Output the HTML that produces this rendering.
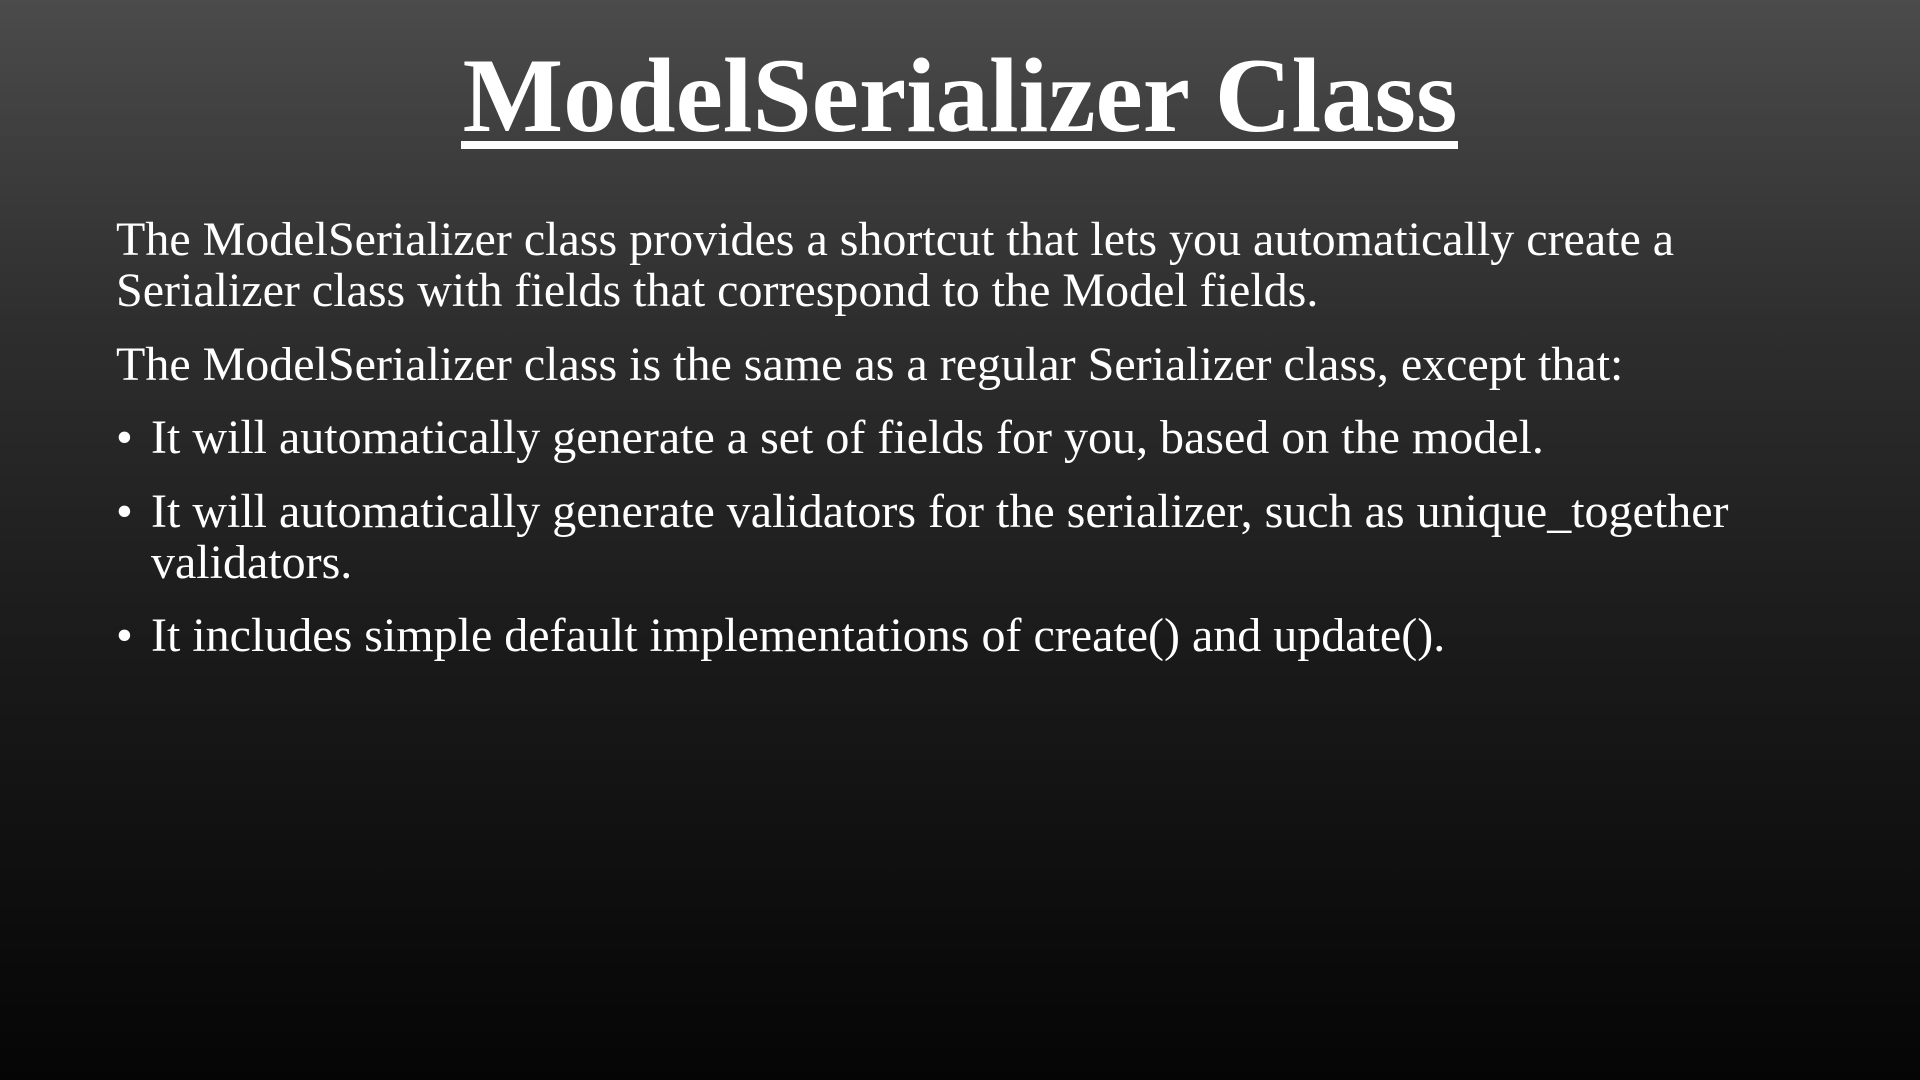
<!DOCTYPE html>
<html><head><meta charset="utf-8"><style>
html,body{margin:0;padding:0}
body{width:1920px;height:1080px;overflow:hidden;position:relative;
background:linear-gradient(180deg,#4b4b4b 0%,#2e2e2e 30%,#1a1a1a 60%,#050505 100%);
font-family:"Liberation Serif",serif;color:#fff}
.t{position:absolute;left:0;width:1920px;text-align:center;top:33px;font-size:106.5px;font-weight:bold;line-height:126px}
.ul{position:absolute;left:461px;width:997px;top:141px;height:8px;background:#fff}
.p{position:absolute;left:116px;font-size:48px;line-height:51px;white-space:nowrap}
.b{position:absolute;left:116px;font-size:48px;line-height:51px}
.b span{position:absolute;left:35px;white-space:nowrap}
</style></head><body>
<div class="t">ModelSerializer Class</div>
<div class="ul"></div>
<div class="p" style="top:214px">The ModelSerializer class provides a shortcut that lets you automatically create a<br>Serializer class with fields that correspond to the Model fields.</div>
<div class="p" style="top:339px">The ModelSerializer class is the same as a regular Serializer class, except that:</div>
<div class="b" style="top:412px">•<span>It will automatically generate a set of fields for you, based on the model.</span></div>
<div class="b" style="top:486px">•<span>It will automatically generate validators for the serializer, such as unique_together<br>validators.</span></div>
<div class="b" style="top:610px">•<span>It includes simple default implementations of create() and update().</span></div>
</body></html>
